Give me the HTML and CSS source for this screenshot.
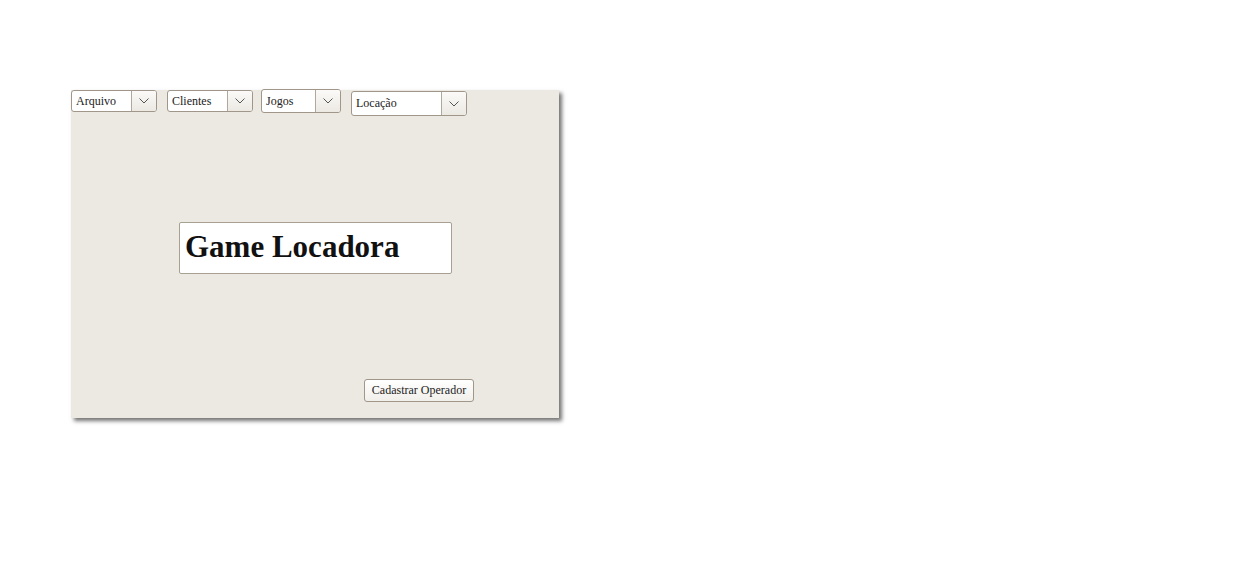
FILE: index.html
```html
<!DOCTYPE html>
<html lang="pt">
<head>
<meta charset="utf-8">
<title>Game Locadora</title>
<link rel="stylesheet" href="styles.css">
</head>
<body>
<div class="panel">
  <div class="toolbar">
    <div class="combo combo-arquivo"><span class="combo-text">Arquivo</span><span class="combo-arrow"><svg width="10" height="6" viewBox="0 0 10 6"><polyline points="0.5,0.5 5,5 9.5,0.5" fill="none" stroke="#555" stroke-width="1"/></svg></span></div>
    <div class="combo combo-clientes"><span class="combo-text">Clientes</span><span class="combo-arrow"><svg width="10" height="6" viewBox="0 0 10 6"><polyline points="0.5,0.5 5,5 9.5,0.5" fill="none" stroke="#555" stroke-width="1"/></svg></span></div>
    <div class="combo combo-jogos"><span class="combo-text">Jogos</span><span class="combo-arrow"><svg width="10" height="6" viewBox="0 0 10 6"><polyline points="0.5,0.5 5,5 9.5,0.5" fill="none" stroke="#555" stroke-width="1"/></svg></span></div>
    <div class="combo combo-locacao"><span class="combo-text">Locação</span><span class="combo-arrow"><svg width="10" height="6" viewBox="0 0 10 6"><polyline points="0.5,0.5 5,5 9.5,0.5" fill="none" stroke="#555" stroke-width="1"/></svg></span></div>
  </div>
  <div class="title-box">Game Locadora</div>
  <button class="btn">Cadastrar Operador</button>
</div>
</body>
</html>
```

FILE: styles.css
```css
* { box-sizing: border-box; }
html, body { margin: 0; padding: 0; background: #ffffff; }
body {
  font-family: "Liberation Serif", "Times New Roman", serif;
  min-height: 100vh;
  padding: 90px 0 0 71px;
}

.panel {
  width: 488px;
  height: 328px;
  background: #ece9e3;
  box-shadow: 3px 3px 4px rgba(0, 0, 0, 0.55);
  display: flex;
  flex-direction: column;
  align-items: flex-start;
}

.toolbar {
  display: flex;
  align-items: flex-start;
  height: 26px;
}

.combo {
  display: flex;
  align-items: stretch;
  background: #ffffff;
  border: 1px solid #a0968a;
  border-radius: 3px;
  font-size: 12px;
  color: #222;
  overflow: hidden;
}
.combo-text {
  flex: 1;
  display: flex;
  align-items: center;
  padding-left: 4px;
}
.combo-arrow {
  width: 25px;
  display: flex;
  align-items: center;
  justify-content: center;
  border-left: 1px solid #b0a89a;
  background: linear-gradient(#fbfaf8, #ece9e3);
}

.combo-arquivo { width: 86px; height: 22px; }
.combo-clientes { width: 86px; height: 22px; margin-left: 10px; }
.combo-jogos { width: 80px; height: 24px; margin-left: 8px; margin-top: -1px; }
.combo-locacao { width: 116px; height: 25px; margin-left: 10px; margin-top: 1px; }

.title-box {
  margin: 106px 0 0 108px;
  width: 273px;
  height: 52px;
  background: #ffffff;
  border: 1px solid #a8a093;
  border-radius: 2px;
  font-size: 31px;
  font-weight: bold;
  color: #111;
  padding: 7px 0 0 5px;
  line-height: 34px;
}

.btn {
  margin: 105px 0 0 293px;
  width: 110px;
  height: 23px;
  padding: 0;
  font-family: "Liberation Serif", "Times New Roman", serif;
  font-size: 12px;
  color: #222;
  background: linear-gradient(#ffffff, #f1efea);
  border: 1px solid #a0968a;
  border-radius: 3px;
}
```
